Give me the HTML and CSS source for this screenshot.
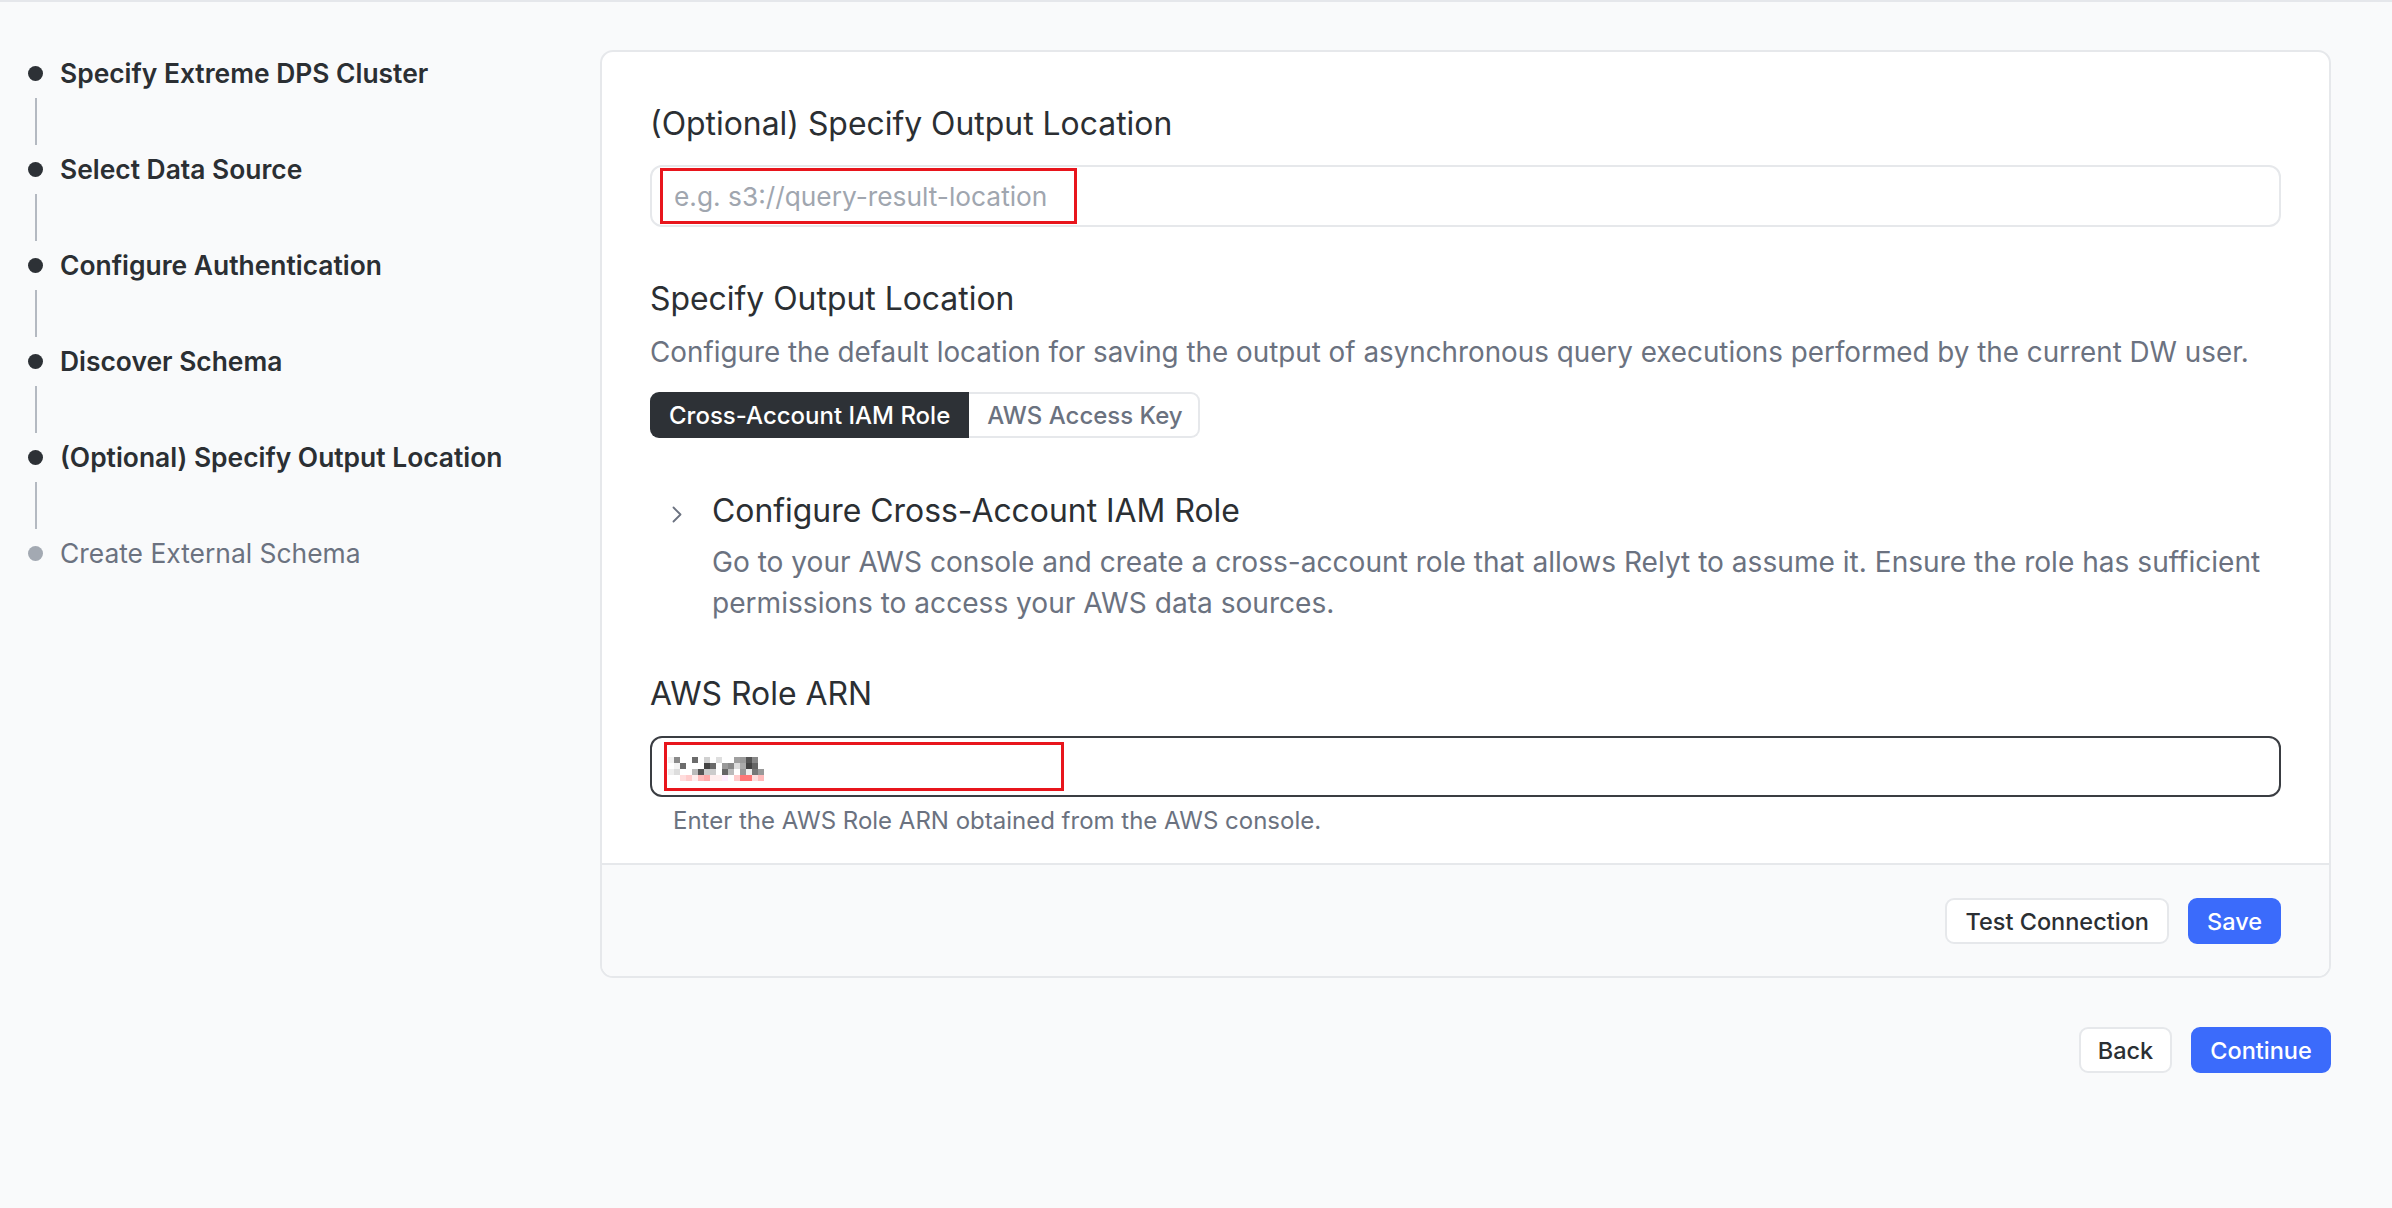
FILE: index.html
```html
<!DOCTYPE html>
<html lang="en">
<head>
<meta charset="utf-8">
<title>Specify Output Location</title>
<link rel="stylesheet" href="styles.css">
</head>
<body>
<div class="page">
  <aside class="sidebar">
    <div class="step done"><span class="dot"></span><span class="step-label">Specify Extreme DPS Cluster</span></div>
    <div class="connector"><span class="line"></span></div>
    <div class="step done"><span class="dot"></span><span class="step-label">Select Data Source</span></div>
    <div class="connector"><span class="line"></span></div>
    <div class="step done"><span class="dot"></span><span class="step-label">Configure Authentication</span></div>
    <div class="connector"><span class="line"></span></div>
    <div class="step done"><span class="dot"></span><span class="step-label">Discover Schema</span></div>
    <div class="connector"><span class="line"></span></div>
    <div class="step done"><span class="dot"></span><span class="step-label">(Optional) Specify Output Location</span></div>
    <div class="connector"><span class="line"></span></div>
    <div class="step todo"><span class="dot"></span><span class="step-label">Create External Schema</span></div>
  </aside>

  <main class="main">
    <section class="card">
      <div class="card-body">
        <h1 class="title">(Optional) Specify Output Location</h1>
        <div class="field field-light">
          <span class="placeholder">e.g. s3://query-result-location</span>
          <span class="redbox redbox-1"></span>
        </div>

        <h2 class="title title-2">Specify Output Location</h2>
        <p class="desc">Configure the default location for saving the output of asynchronous query executions performed by the current DW user.</p>

        <div class="segmented">
          <span class="seg seg-active">Cross-Account IAM Role</span>
          <span class="seg seg-idle">AWS Access Key</span>
        </div>

        <div class="collapse">
          <div class="chev-col">
            <svg class="chev" width="10" height="17" viewBox="0 0 10 17"><polyline points="1.5,1.5 8.5,8.5 1.5,15.5" fill="none" stroke="#6b7280" stroke-width="1.8" stroke-linecap="round" stroke-linejoin="round"/></svg>
          </div>
          <div class="collapse-body">
            <h3 class="title">Configure Cross-Account IAM Role</h3>
            <p class="desc desc-wrap">Go to your AWS console and create a cross-account role that allows Relyt to assume it. Ensure the role has sufficient permissions to access your AWS data sources.</p>
          </div>
        </div>

        <h3 class="title title-arn">AWS Role ARN</h3>
        <div class="field field-dark">
          <svg class="mosaic" width="96" height="24" viewBox="0 0 16 4" shape-rendering="crispEdges">
            <rect x="0" y="0" width="1" height="1" fill="#f2f2f2"/>
            <rect x="1" y="0" width="1" height="1" fill="#8a8a8a"/>
            <rect x="4" y="0" width="1" height="1" fill="#6b6b6b"/>
            <rect x="6" y="0" width="1" height="1" fill="#d0d0d0"/>
            <rect x="8" y="0" width="1" height="1" fill="#dedede"/>
            <rect x="11" y="0" width="1" height="1" fill="#a0a0a0"/>
            <rect x="12" y="0" width="1" height="1" fill="#9a9a9a"/>
            <rect x="13" y="0" width="1" height="1" fill="#555"/>
            <rect x="14" y="0" width="1" height="1" fill="#888"/>
            <rect x="1" y="1" width="1" height="1" fill="#f4f4f4"/>
            <rect x="2" y="1" width="1" height="1" fill="#6c6c6c"/>
            <rect x="6" y="1" width="1" height="1" fill="#444"/>
            <rect x="7" y="1" width="1" height="1" fill="#6a6a6a"/>
            <rect x="9" y="1" width="1" height="1" fill="#999"/>
            <rect x="10" y="1" width="1" height="1" fill="#888"/>
            <rect x="11" y="1" width="1" height="1" fill="#ddd"/>
            <rect x="12" y="1" width="1" height="1" fill="#aaa"/>
            <rect x="13" y="1" width="1" height="1" fill="#444"/>
            <rect x="14" y="1" width="1" height="1" fill="#666"/>
            <rect x="0" y="2" width="1" height="1" fill="#eee"/>
            <rect x="1" y="2" width="1" height="1" fill="#ddd"/>
            <rect x="4" y="2" width="1" height="1" fill="#bbb"/>
            <rect x="5" y="2" width="1" height="1" fill="#555"/>
            <rect x="6" y="2" width="1" height="1" fill="#ccc"/>
            <rect x="7" y="2" width="1" height="1" fill="#ccc"/>
            <rect x="9" y="2" width="1" height="1" fill="#666"/>
            <rect x="10" y="2" width="1" height="1" fill="#bbb"/>
            <rect x="12" y="2" width="1" height="1" fill="#999"/>
            <rect x="13" y="2" width="1" height="1" fill="#eee"/>
            <rect x="14" y="2" width="1" height="1" fill="#777"/>
            <rect x="15" y="2" width="1" height="1" fill="#999"/>
            <rect x="2" y="3" width="1" height="1" fill="#fdd"/>
            <rect x="3" y="3" width="1" height="1" fill="#fcc"/>
            <rect x="4" y="3" width="1" height="1" fill="#fee"/>
            <rect x="5" y="3" width="1" height="1" fill="#fbb"/>
            <rect x="6" y="3" width="1" height="1" fill="#faa"/>
            <rect x="7" y="3" width="1" height="1" fill="#fee"/>
            <rect x="8" y="3" width="1" height="1" fill="#fee"/>
            <rect x="9" y="3" width="1" height="1" fill="#fef"/>
            <rect x="11" y="3" width="1" height="1" fill="#fcc"/>
            <rect x="12" y="3" width="1" height="1" fill="#f77"/>
            <rect x="13" y="3" width="1" height="1" fill="#f77"/>
            <rect x="14" y="3" width="1" height="1" fill="#fdd"/>
            <rect x="15" y="3" width="1" height="1" fill="#fbb"/>
          </svg>
          <span class="redbox redbox-2"></span>
        </div>
        <p class="helper">Enter the AWS Role ARN obtained from the AWS console.</p>
      </div>
      <div class="card-footer">
        <button class="btn btn-outline" type="button">Test Connection</button>
        <button class="btn btn-primary btn-save" type="button">Save</button>
      </div>
    </section>

    <div class="nav-actions">
      <button class="btn btn-outline btn-back" type="button">Back</button>
      <button class="btn btn-primary btn-continue" type="button">Continue</button>
    </div>
  </main>
</div>
</body>
</html>
```
FILE: styles.css
```css
* { box-sizing: border-box; }

html, body {
  margin: 0;
  padding: 0;
}

body {
  background: #f9fafb;
  border-top: 2px solid #e5e7eb;
  font-family: "Inter", "Noto Sans", sans-serif;
  color: #2b2f33;
  min-height: 1208px;
}

.page {
  display: flex;
  align-items: flex-start;
}

/* ---------- sidebar ---------- */
.sidebar {
  width: 600px;
  flex: none;
  padding: 53px 0 0 28px;
  display: flex;
  flex-direction: column;
}

.step {
  display: flex;
  align-items: center;
  height: 36px;
  gap: 17px;
}

.dot {
  width: 15px;
  height: 15px;
  border-radius: 50%;
  background: #2d3136;
  flex: none;
}

.step-label {
  font-size: 26.4px;
  font-weight: 600;
  color: #2b2f33;
  white-space: nowrap;
}

.step.todo .dot { background: #a3a9b2; }
.step.todo .step-label { font-weight: 400; color: #6b7280; }

.connector {
  height: 60px;
  display: flex;
  align-items: center;
  padding-left: 6.5px;
}

.connector .line {
  width: 2px;
  height: 47px;
  background: #b4b9c1;
}

/* ---------- main ---------- */
.main {
  flex: 1;
  padding: 48px 61px 0 0;
  display: flex;
  flex-direction: column;
}

.card {
  background: #ffffff;
  border: 2px solid #e6e8eb;
  border-radius: 13px;
  overflow: hidden;
}

.card-body {
  padding: 50px 48px 26px 48px;
  display: flex;
  flex-direction: column;
}

.title {
  margin: 0;
  font-size: 31.9px;
  line-height: 44px;
  font-weight: 400;
  color: #2b2f33;
}

.field {
  position: relative;
  height: 62px;
  border-radius: 12px;
  margin-top: 19px;
  display: flex;
  align-items: center;
  padding-left: 22px;
  background: #fff;
}

.field-light {
  border: 2px solid #e6e8eb;
}

.placeholder {
  font-size: 26.3px;
  color: #a0a6af;
}

.field-dark {
  border: 2px solid #3a3d42;
  height: 61px;
  margin-top: 20px;
}

.redbox {
  position: absolute;
  border: 3px solid #e8151c;
  pointer-events: none;
}

.redbox-1 {
  left: 8px;
  top: 1px;
  width: 417px;
  height: 56px;
}

.redbox-2 {
  left: 12px;
  top: 4px;
  width: 400px;
  height: 49px;
}

.mosaic {
  position: relative;
  top: 2px;
  margin-left: -6px;
}

.title-2 { margin-top: 50px; }

.desc {
  margin: 11px 0 0 0;
  font-size: 27.8px;
  line-height: 40px;
  color: #6b7280;
}

.segmented {
  display: flex;
  margin-top: 20px;
  height: 46px;
}

.seg {
  display: flex;
  align-items: center;
  font-size: 24px;
  font-weight: 500;
  padding: 0 19px;
  white-space: nowrap;
}

.seg-active {
  background: #2d3136;
  color: #ffffff;
  border-radius: 9px 0 0 9px;
}

.seg-idle {
  background: #ffffff;
  color: #6b7280;
  border: 2px solid #e6e8eb;
  border-left: none;
  border-radius: 0 9px 9px 0;
  padding: 0 15px 0 18px;
}

.collapse {
  display: flex;
  margin-top: 51px;
}

.chev-col {
  width: 62px;
  flex: none;
  padding: 17px 0 0 22px;
}

.chev { display: block; }

.collapse-body {
  display: flex;
  flex-direction: column;
}

.desc-wrap {
  margin-top: 9px;
  line-height: 41px;
  font-size: 28.1px;
}

.title-arn { margin-top: 48px; }

.helper {
  margin: 8px 0 0 23px;
  font-size: 24px;
  line-height: 32px;
  color: #6b7280;
}

.card-footer {
  background: #f9fafb;
  border-top: 2px solid #e6e8eb;
  display: flex;
  justify-content: flex-end;
  align-items: center;
  gap: 19px;
  padding: 33px 48px 32px 0;
}

/* ---------- buttons ---------- */
.btn {
  font-family: "Inter", "Noto Sans", sans-serif;
  font-size: 23.5px;
  font-weight: 500;
  height: 46px;
  border-radius: 9px;
  padding: 0 18px;
  cursor: pointer;
  white-space: nowrap;
}

.btn-outline {
  background: #ffffff;
  color: #2b2f33;
  border: 2px solid #e6e8eb;
}

.btn-primary {
  background: #3b6bfb;
  color: #ffffff;
  border: 2px solid #3b6bfb;
}

.btn-save { width: 93px; padding: 0; }
.btn-back { width: 93px; padding: 0; }
.btn-continue { width: 140px; padding: 0; }

.nav-actions {
  display: flex;
  justify-content: flex-end;
  gap: 19px;
  margin-top: 49px;
}
```
